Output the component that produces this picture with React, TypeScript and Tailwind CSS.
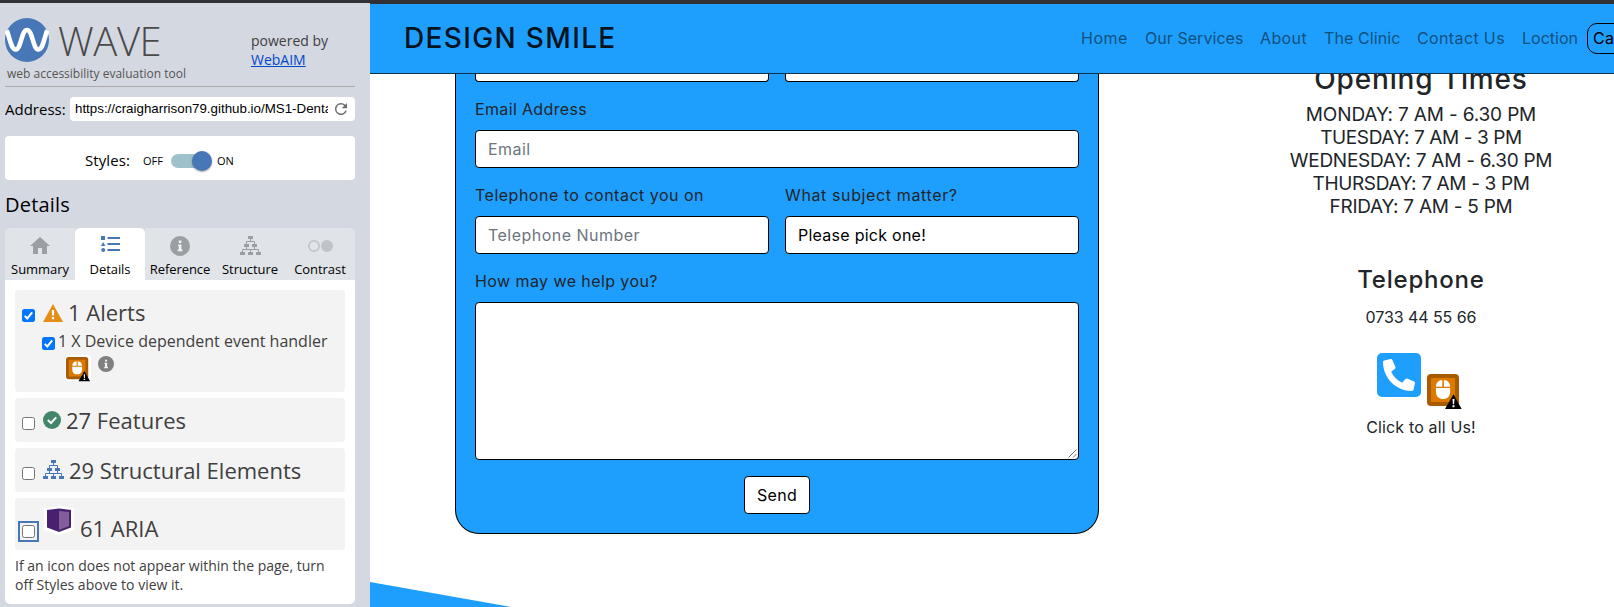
import type { ReactNode } from "react";

const wave = "font-['Open_Sans',sans-serif]";

function Sitemap({ className }: { className: string }) {
  return (
    <svg viewBox="0 0 21 19" className={className} fill="currentColor">
      <rect x="8" y="0" width="5" height="3" />
      <rect x="4" y="8" width="5" height="3" />
      <rect x="12" y="8" width="5" height="3" />
      <rect x="0" y="16" width="5" height="3" />
      <rect x="8" y="16" width="5" height="3" />
      <rect x="16" y="16" width="5" height="3" />
      <path
        d="M10.5 3v2.5M6.5 8V5.5h8V8M6.5 11v2.5M14.5 11v2.5M2.5 16v-2.5h16V16M10.5 13.5V16"
        fill="none"
        stroke="currentColor"
        strokeWidth="1"
      />
    </svg>
  );
}

function Info({ className }: { className: string }) {
  return (
    <svg viewBox="0 0 20 20" className={className}>
      <circle cx="10" cy="10" r="10" fill="currentColor" />
      <path d="M8.8 4.6h2.6v2.4H8.8zM8 8.4h3.4v5.1h1v1.7H7.8v-1.7h1v-3.4H8z" fill="#f3f3f3" />
    </svg>
  );
}

function MouseIcon({ className }: { className: string }) {
  return (
    <svg viewBox="0 0 36 36" className={className}>
      <rect x="0" y="0" width="32" height="32" rx="4" fill="#a85b00" />
      <rect x="4" y="4" width="24" height="24" fill="#db7900" />
      <path d="M15.3 6v6.7H9C9 8.600 11.500 6.200 15.300 6zM16.900 6c3.800.2 6.200 2.600 6.200 6.700h-6.200zM9 14h14.100v4.200c0 4.200-2.900 6.800-7 6.800S9 22.400 9 18.200z" fill="#fff" />
      <path d="M26.500 20.200 34.700 35H18z" fill="#000" />
      <path d="M25.500 25h2l-.4 5.200h-1.200zM25.500 31.200h2v2h-2z" fill="#fff" />
    </svg>
  );
}

function Check({ checked = false, className = "" }: { checked?: boolean; className?: string }) {
  return (
    <span
      role="checkbox"
      aria-checked={checked}
      className={`block size-[13px] shrink-0 rounded-[2.5px] ${checked ? "bg-[#0075ff]" : "border border-[#767676] bg-white"} ${className}`}
    >
      {checked && (
        <svg viewBox="0 0 13 13" className="size-[13px]">
          <path d="M2.700 6.900 5.300 9.400 10.200 3.300" fill="none" stroke="#fff" strokeWidth="2" />
        </svg>
      )}
    </span>
  );
}

function Tab({ label, icon, active = false, className = "" }: { label: string; icon: ReactNode; active?: boolean; className?: string }) {
  return (
    <div className={`flex h-[52px] w-[70px] flex-col items-center ${active ? "rounded-t-[5px] bg-white" : "bg-[#e0e3e8]"} ${className}`}>
      <div className="flex h-[32px] items-center justify-center pt-[3px]">{icon}</div>
      <div className="text-[13px] leading-[18px] tracking-[-0.06px] text-black">{label}</div>
    </div>
  );
}

function Sidebar() {
  return (
    <aside className={`flex h-full w-[370px] shrink-0 flex-col bg-[#d4d8e0] pr-[15px] pl-[5px] text-[#404040] ${wave}`}>
      <div className="-mx-[15px] h-[3px] shrink-0 bg-[#323234]" />
      <header className="flex h-[84px] shrink-0 justify-between border-b border-[#aaa] pt-[15px]">
        <div className="flex flex-col">
          <div className="flex h-[45px]">
            <svg viewBox="0 0 44 44" className="size-[44px]">
              <circle cx="22" cy="22" r="22" fill="#4777b7" />
              <path
                d="M1.800 12.500C4.500 19 6 31.500 10.800 31.500C16 31.500 16.500 12 22 12C27.500 12 28 31.500 33.200 31.500C38 31.500 39.500 19 42.200 12.500"
                fill="none"
                stroke="#fff"
                strokeWidth="4.600"
              />
            </svg>
            <span className="pl-[9px] text-[40px] leading-[45px] font-light tracking-[-0.4px] text-[#4a4a4a]">WAVE</span>
          </div>
          <span className="pt-[2px] pl-[2px] text-[12px] leading-[18px] text-[#555]">web accessibility evaluation tool</span>
        </div>
        <div className="mt-[13px] w-[104px] text-[14px] leading-[19px]">
          powered by
          <br />
          <a className="text-[#0049cc] underline">WebAIM</a>
        </div>
      </header>
      <div className="mt-[10px] flex h-[24px] shrink-0 items-center">
        <span className="w-[65px] text-[15px] leading-[22px] text-black">Address:</span>
        <div className="flex h-[24px] w-[285px] items-center rounded-[4px] bg-white pl-[5px]">
          <span className="w-[253px] overflow-hidden font-['Liberation_Sans',sans-serif] text-[13.333px] leading-[24px] whitespace-nowrap text-black">
            https://craigharrison79.github.io/MS1-Dental
          </span>
          <svg viewBox="0 0 24 24" className="ml-[4px] size-[18px]" fill="#6e6e6e">
            <path d="M17.650 6.350A8 8 0 1 0 19.730 14h-2.080A6 6 0 1 1 12 6c1.660 0 3.140.690 4.220 1.780L13 11h7V4z" />
          </svg>
        </div>
      </div>
      <div className="mt-[15px] flex h-[44px] shrink-0 items-center rounded-[4px] bg-white pt-[5px] pl-[80px] text-black">
        <span className="-mt-[2px] w-[58px] text-[15px] leading-[22px] tracking-[0.09px]">Styles:</span>
        <span className="w-[28px] text-[11px] leading-[20px]">OFF</span>
        <span className="flex h-[14px] w-[41px] items-center rounded-full bg-linear-to-r from-[#9fc1cb] from-[34px] to-white to-[34px]">
          <span className="ml-[21px] block size-[20px] rounded-full bg-[#4777b7] shadow-[0_1px_2px_rgba(0,0,0,0.35)]" />
        </span>
        <span className="pl-[5px] text-[11px] leading-[20px]">ON</span>
      </div>
      <h2 className="mt-[12px] h-[36px] shrink-0 text-[20px] leading-[26px] tracking-[0.2px] text-black">Details</h2>
      <div className="flex shrink-0">
        <Tab
          label="Summary"
          className="rounded-tl-[5px]"
          icon={
            <svg viewBox="0 0 20 17" className="h-[17px] w-[20px]" fill="#9b9fa3">
              <path d="M8 17v-6h4v6h5V9h3L10 0 0 9h3v8z" />
            </svg>
          }
        />
        <Tab
          label="Details"
          active
          icon={
            <svg viewBox="0 0 19 16" className="mb-[3px] h-[16px] w-[19px]" fill="#4777b7">
              <path d="M0 0h4v4H0zM6.500 1H19v2H6.500zM2.200 6 4.400 10H0zM6.500 7H19v2H6.500zM6.500 13H19v2H6.500z" />
              <circle cx="2.200" cy="14" r="2" />
            </svg>
          }
        />
        <Tab label="Reference" icon={<Info className="size-[20px] text-[#9b9fa3]" />} />
        <Tab label="Structure" icon={<Sitemap className="h-[19px] w-[21px] text-[#9b9fa3]" />} />
        <Tab
          label="Contrast"
          className="rounded-tr-[5px]"
          icon={
            <svg viewBox="0 0 26 12" className="ml-[2px] h-[12px] w-[26px]">
              <circle cx="6" cy="6" r="5.200" fill="none" stroke="#bfc2c6" strokeWidth="1.500" />
              <circle cx="19" cy="6" r="6" fill="#bfc2c6" />
            </svg>
          }
        />
      </div>
      <div className="flex h-[324px] shrink-0 flex-col gap-[6px] rounded-b-[5px] bg-white px-[10px] pt-[10px]">
        <section className="h-[102px] rounded-[4px] bg-[#f3f3f3] pt-[7px]">
          <div className="flex h-[30px] items-center pl-[7px]">
            <Check checked className="mt-[7px]" />
            <svg viewBox="0 0 20 18" className="mt-px ml-[8px] h-[18px] w-[20px]">
              <path d="M10 0 20 18H0z" fill="#e58d15" />
              <path d="M8.900 6h2.200v5.500H8.900zM8.900 13h2.200v2.200H8.900z" fill="#fff" />
            </svg>
            <span className="ml-[5px] text-[22px] leading-[30px]">1 Alerts</span>
          </div>
          <div className="flex h-[26px] items-center pl-[27px]">
            <Check checked className="mt-[6px]" />
            <span className="mt-[2px] ml-[3px] text-[16px] leading-[26px] whitespace-nowrap">1 X Device dependent event handler</span>
          </div>
          <div className="flex items-start pl-[50px]">
            <span className="mt-[2px] flex h-[26px] w-[26px] rounded-[4px] bg-white pt-[2px] pl-px">
              <MouseIcon className="size-[25px] shrink-0" />
            </span>
            <Info className="mt-[3px] ml-[7px] size-[16px] text-[#808080]" />
          </div>
        </section>
        <section className="flex h-[44px] shrink-0 items-center rounded-[4px] bg-[#f3f3f3] pl-[7px]">
          <Check className="mt-[7px]" />
          <svg viewBox="0 0 18 18" className="mb-px ml-[8px] size-[18px]">
            <circle cx="9" cy="9" r="9" fill="#43856a" />
            <path d="M4.800 9 8 12 13.200 6.300" fill="none" stroke="#fff" strokeWidth="2" />
          </svg>
          <span className="ml-[5px] text-[22px] leading-[44px]">27 Features</span>
        </section>
        <section className="flex h-[44px] shrink-0 items-center rounded-[4px] bg-[#f3f3f3] pl-[7px]">
          <Check className="mt-[7px]" />
          <Sitemap className="mb-px ml-[8px] h-[19px] w-[21px] text-[#4777b7]" />
          <span className="ml-[5px] text-[22px] leading-[44px]">29 Structural Elements</span>
        </section>
        <section className="flex h-[52px] shrink-0 items-start rounded-[4px] bg-[#f3f3f3] pl-[7px]">
          <span className="mt-[23px] -ml-[4px] border-2 border-[#4777b7] p-[2px]">
            <Check />
          </span>
          <svg viewBox="0 0 30 29" className="mt-[8px] ml-[5px] h-[29px] w-[30px]">
            <path d="M0 2 15 0 30 2v22l-15 5L0 24z" fill="#fff" />
            <path d="M3 4 15 2.500 27 4v17.500L15 26 3 21.500z" fill="#482070" />
            <path d="M15 5 25 6v14l-10 4z" fill="#825f9c" />
          </svg>
          <span className="ml-[6px] text-[22px] leading-[61px]">61 ARIA</span>
        </section>
        <p className="text-[14px] leading-[19px] whitespace-nowrap">
          If an icon does not appear within the page, turn
          <br />
          off Styles above to view it.
        </p>
      </div>
    </aside>
  );
}

function NavBar() {
  return (
    <nav className="flex h-[70px] shrink-0 items-center justify-between border-b border-[#12324a] bg-[#1e9ffd] pl-[34px] text-[16px] leading-[24px] whitespace-nowrap text-[#11517f]">
      <span className="-mt-[1px] text-[28px] leading-[40px] font-medium tracking-[1.350px] text-[#03131f]">DESIGN SMILE</span>
      <div className="flex h-[31px] w-[533px] shrink-0 items-center overflow-hidden">
        <span className="-mt-[2px] w-[64px] shrink-0 tracking-[0.540px]">Home</span>
        <span className="-mt-[2px] w-[115px] shrink-0 tracking-[0.050px]">Our Services</span>
        <span className="-mt-[2px] w-[64px] shrink-0 tracking-[0.380px]">About</span>
        <span className="-mt-[2px] w-[93px] shrink-0 tracking-[0.100px]">The Clinic</span>
        <span className="-mt-[2px] w-[105px] shrink-0 tracking-[0.370px]">Contact Us</span>
        <span className="-mt-[2px] w-[65px] shrink-0">Loction</span>
        <span className="h-[31px] w-[80px] shrink-0 rounded-[10px] border border-black pl-[5px] leading-[28px] tracking-[0.300px] text-black">
          Call Us
        </span>
      </div>
    </nav>
  );
}

const field = "flex h-[38px] items-center rounded-[4px] border border-black bg-white px-3";

function ContactForm() {
  return (
    <form className="ml-[85px] flex h-[460px] w-[644px] shrink-0 flex-col rounded-b-[24px] border border-t-0 border-black bg-[#1e9ffd] px-[19px] text-[16px] leading-[24px] whitespace-nowrap text-[#212529]">
      <div className="grid grid-cols-2 gap-4">
        <div className="h-[8px] rounded-b-[4px] border border-t-0 border-black bg-white" />
        <div className="h-[8px] rounded-b-[4px] border border-t-0 border-black bg-white" />
      </div>
      <label className="mt-[15px] tracking-[0.350px]">Email Address</label>
      <div className={`mt-[9px] pb-px tracking-[0.420px] text-[#6c757d] ${field}`}>Email</div>
      <div className="mt-[15px] grid grid-cols-2 gap-4">
        <label className="tracking-[0.500px]">Telephone to contact you on</label>
        <label className="tracking-[0.620px]">What subject matter?</label>
      </div>
      <div className="mt-[9px] grid grid-cols-2 gap-4">
        <div className={`pb-px tracking-[0.470px] text-[#6c757d] ${field}`}>Telephone Number</div>
        <div className={`pb-px tracking-[0.260px] text-black ${field}`}>Please pick one!</div>
      </div>
      <label className="mt-[15px] tracking-[0.420px]">How may we help you?</label>
      <div className="mt-[9px] flex h-[158px] shrink-0 items-end justify-end rounded-[4px] border border-black bg-white">
        <svg viewBox="0 0 9 9" className="mr-px mb-px size-[9px]" stroke="#666" strokeWidth="0.900">
          <path d="M.5 8.500 8.500.500M5 8.500 8.500 5" />
        </svg>
      </div>
      <button type="button" className="mt-[16px] h-[38px] w-[66px] shrink-0 self-center rounded-[4px] border border-black bg-white pb-px tracking-[0.290px] text-black">
        Send
      </button>
    </form>
  );
}

function OpeningTimes() {
  return (
    <div className="-mt-[10px] ml-[129px] flex w-[386px] shrink-0 flex-col items-center whitespace-nowrap text-[#212529]">
      <h3 className="text-[28px] leading-[30px] font-medium tracking-[0.850px]">Opening Times</h3>
      <div className="mt-[9px] flex flex-col items-center text-[19px] leading-[23px]">
        <span className="tracking-[-0.150px]">MONDAY: 7 AM - 6.30 PM</span>
        <span className="tracking-[-0.400px]">TUESDAY: 7 AM - 3 PM</span>
        <span className="tracking-[-0.280px]">WEDNESDAY: 7 AM - 6.30 PM</span>
        <span className="tracking-[-0.350px]">THURSDAY: 7 AM - 3 PM</span>
        <span className="tracking-[-0.250px]">FRIDAY: 7 AM - 5 PM</span>
      </div>
      <h3 className="mt-[47px] text-[24px] leading-[30px] font-medium tracking-[0.800px]">Telephone</h3>
      <p className="mt-[10px] text-[16px] leading-[24px] tracking-[-0.080px]">0733 44 55 66</p>
      <div className="mt-[24px] mr-[3px] flex items-start">
        <span className="flex size-[44px] items-center justify-center rounded-[5px] bg-[#1e9ffd]">
          <svg viewBox="0 0 512 512" className="size-[32px] -scale-x-100" fill="#fff">
            <path d="M493.400 24.600l-104-24c-11.300-2.600-22.900 3.300-27.500 13.900l-48 112c-4.200 9.800-1.400 21.300 6.900 28l60.600 49.600c-36 76.700-98.900 140.500-177.200 177.200l-49.600-60.600c-6.800-8.300-18.200-11.100-28-6.900l-112 48C3.900 366.500-2 378.100.6 389.400l24 104C27.100 504.200 36.700 512 48 512c256.100 0 464-207.500 464-464 0-11.200-7.700-20.900-18.600-23.400z" />
          </svg>
        </span>
        <MouseIcon className="mt-[21px] ml-[6px] size-[36px]" />
      </div>
      <p className="mt-[5px] text-[16px] leading-[24px] tracking-[0.150px]">Click to all Us!</p>
    </div>
  );
}

export default function App() {
  return (
    <div className="flex h-[607px] w-[1614px] overflow-hidden bg-white">
      <Sidebar />
      <main className="flex min-w-0 flex-1 flex-col overflow-hidden font-['Inter',sans-serif]">
        <div className="h-[4px] shrink-0 bg-[#323234]" />
        <NavBar />
        <div className="flex h-[508px] shrink-0 items-start overflow-hidden">
          <ContactForm />
          <OpeningTimes />
        </div>
        <svg viewBox="0 0 141 25" className="h-[25px] w-[141px] shrink-0">
          <path d="M0 0 141 25H0z" fill="#1e9ffd" />
        </svg>
      </main>
    </div>
  );
}
